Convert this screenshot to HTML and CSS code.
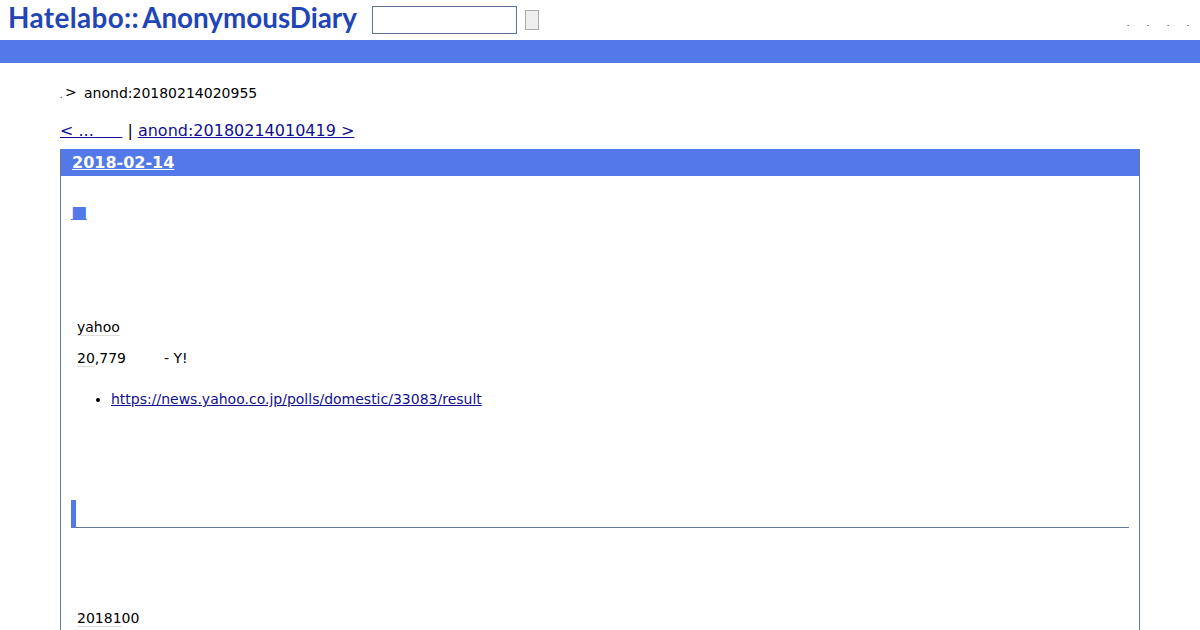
FILE: index.html
```html
<!DOCTYPE html>
<html lang="en">
<head>
    <meta charset="UTF-8">
    <meta name="viewport" content="width=device-width, initial-scale=1.0">
    <title>Hatelabo::AnonymousDiary</title>
    <link rel="stylesheet" href="styles.css">
</head>
<body>
    <div class="header">
        <a class="logo"><span class="logo-ns">Hatelabo::</span>AnonymousDiary</a>
        <form class="search">
            <input class="search-box" type="text">
            <button class="search-btn" type="button"></button>
        </form>
        <ul class="usermenu">
            <li>.</li>
            <li>.</li>
            <li>.</li>
            <li>.</li>
        </ul>
    </div>
    <div class="bar"></div>

    <div class="content">
        <div class="breadcrumb"><span class="crumb-home">.</span><span class="crumb-sep">&gt;</span><span>anond:20180214020955</span></div>

        <div class="pager"><a href="#">&lt; ...<span class="pager-gap">&nbsp;&nbsp;&nbsp;&nbsp;&nbsp;&nbsp;</span></a> | <a href="#">anond:20180214010419 &gt;</a></div>

        <div class="day">
            <h2 class="day-title"><a href="#">2018-02-14</a></h2>
            <div class="day-body">
                <h3 class="entry-title"><a href="#">■</a></h3>
                <p class="first"><span class="keyword">yahoo</span></p>
                <p><span class="keyword">20</span>,779<span class="gap"></span>- Y!</p>
                <ul class="links">
                    <li><a href="#">https://news.yahoo.co.jp/polls/domestic/33083/result</a></li>
                </ul>
                <h4 class="sub"></h4>
                <p class="after-sub"><span class="keyword">20181</span>00</p>
                <p>&nbsp;</p>
            </div>
        </div>
    </div>
</body>
</html>
```

FILE: styles.css
```css
body {
    margin: 0;
    font-family: "DejaVu Sans", sans-serif;
    font-size: 14px;
    color: #000;
    background: #fff;
}
a {
    color: #11118f;
}
.header {
    display: flex;
    align-items: center;
    height: 40px;
}
.logo {
    width: 350px;
    margin: -4px 0 0 8px;
    font-family: "Lato", sans-serif;
    font-weight: 700;
    font-size: 27.8px;
    line-height: 40px;
    white-space: nowrap;
    color: #2145b5;
}
.logo-ns {
    margin-right: 3px;
    letter-spacing: 0.4px;
}
.search {
    display: flex;
    align-items: center;
    gap: 8px;
    margin: 0 0 0 14px;
}
.search-box {
    box-sizing: border-box;
    width: 145px;
    height: 28px;
    margin: 0;
    padding: 0;
    background: #fff;
    border: 1px solid #5a7299;
}
.search-btn {
    width: 14px;
    height: 20px;
    padding: 0;
    background: #efefef;
    border: 1px solid #aaa;
    border-radius: 0;
}
.usermenu {
    display: flex;
    margin: 0 2px 0 auto;
    padding: 8px 0 0;
    list-style: none;
    font-size: 8px;
    line-height: 8px;
}
.usermenu li {
    width: 20px;
    text-align: center;
}
.bar {
    height: 23px;
    background: #5279e7;
}
.content {
    margin: 0 60px;
}
.breadcrumb {
    padding-top: 21px;
    line-height: 17px;
}
.crumb-home {
    display: inline-block;
    width: 5px;
    font-size: 8px;
}
.crumb-sep {
    display: inline-block;
    width: 19px;
    vertical-align: 1px;
}
.pager {
    margin-top: 17px;
    font-size: 16px;
    line-height: 19px;
}
.pager-gap {
    word-spacing: -0.32px;
}
.day {
    margin-top: 9px;
    border: 1px solid #64789f;
    border-top: 0;
}
.day-title {
    margin: 0;
    padding: 0 11px;
    font-size: 16px;
    line-height: 27px;
    background: #5279e7;
}
.day-title a {
    color: #fff;
}
.day-body {
    padding: 0 10px;
}
.entry-title {
    margin: 27px 0 0;
    font-size: 17px;
    font-weight: normal;
    line-height: 19px;
}
.entry-title a {
    color: #5279e7;
}
.day-body p {
    margin: 14px 0 0 6px;
    line-height: 17px;
}
.day-body p.first {
    margin-top: 97px;
}
.keyword {
    border-bottom: 1px solid #ddd;
}
.gap {
    display: inline-block;
    width: 38px;
}
.links {
    margin: 24px 0 0;
    padding-left: 40px;
    line-height: 17px;
}
.sub {
    height: 27px;
    margin: 92px 0 0;
    border-left: 5px solid #5279e7;
    border-bottom: 1px solid #64789f;
}
.day-body p.after-sub {
    margin-top: 82px;
}
```
